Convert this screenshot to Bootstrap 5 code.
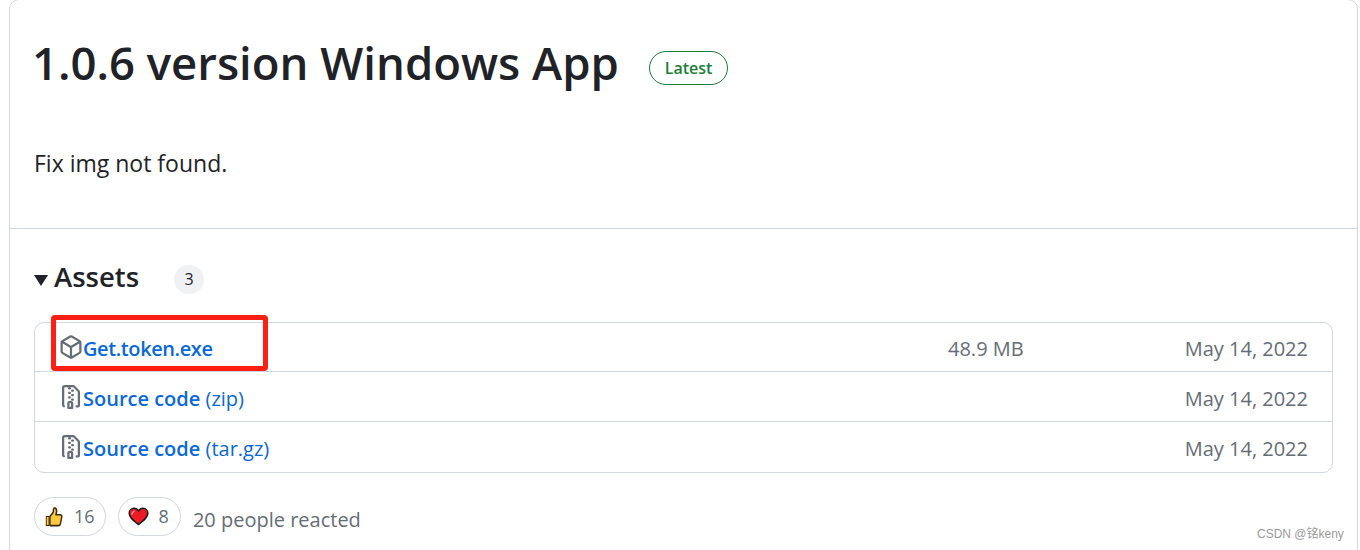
<!DOCTYPE html>
<html lang="en">
<head>
  <meta charset="UTF-8">
  <title>1.0.6 version Windows App</title>
  <meta name="viewport" content="width=device-width, initial-scale=1">
  <link href="https://cdn.jsdelivr.net/npm/bootstrap@5.3.3/dist/css/bootstrap.min.css" rel="stylesheet">
  <script src="https://cdn.jsdelivr.net/npm/bootstrap@5.3.3/dist/js/bootstrap.bundle.min.js"></script>
  <style>
    html, body { height: 550px; overflow: hidden; }
    body { background: #fff; color: #1f2328; font-family: "Open Sans", "Noto Sans", sans-serif; }
    .release-box { margin: -1px 2px 0 9px; height: 560px; border: 1px solid #d0d7de; border-radius: 10px; }
    .release-top { height: 229px; padding: 36px 24px 0; border-bottom: 1px solid #d0d7de; }
    .release-title { font-size: 45.5px; line-height: 52px; font-weight: 600; margin: 0 0 0 -2px; }
    .latest-pill { font-size: 16px; font-weight: 600; line-height: 32px; height: 34px; padding: 0 15px; margin: 12px 0 0 30px; color: #1a7f37; border: 1px solid #1a7f37; border-radius: 17px; }
    .release-note { font-size: 23px; line-height: 32px; margin: 59px 0 0; }
    .release-bottom { padding: 28px 24px 0; }
    .caret-down { width: 0; height: 0; border-style: solid; border-width: 11px 7px 0; border-color: #1f2328 transparent transparent; margin: 6px 6px 0 0; }
    .assets-title { font-size: 27.5px; line-height: 40px; font-weight: 600; margin: 0; }
    .count-pill { width: 30px; height: 29px; margin: 4px 0 0 35px; font-size: 16px; background: #eff1f3; border-radius: 15px; }
    .asset-list { margin: 25px 0 0; width: 1299px; border: 1px solid #d0d7de; border-radius: 10px; }
    .asset-row { height: 50px; padding: 4px 24px 0 24px; border-bottom: 1px solid #d0d7de; font-size: 20px; }
    .asset-row:first-child { height: 49px; }
    .asset-row:last-child { border-bottom: 0; }
    .asset-link { color: #0969da; font-weight: 600; text-decoration: none; }
    .asset-ext { color: #0969da; font-weight: 400; }
    .asset-icon { fill: #656d76; width: 24px; height: 24px; flex: none; margin: -4px 0 0 0; }
    .asset-tight { letter-spacing: -0.4px; }
    .asset-size { position: absolute; left: 948px; color: #656d76; }
    .asset-date { color: #656d76; }
    .reaction-row { margin-top: 24px; color: #656d76; }
    .reaction-pill { height: 39px; padding: 0 11px 0 9px; border: 1px solid #d0d7de; border-radius: 20px; font-size: 18px; gap: 10px; background: #fff; color: #656d76; }
    .reaction-pill.first-pill { padding-right: 10px; }
    .reaction-text { font-size: 20px; margin-left: 4px; padding-top: 6px; }
    .red-frame { position: absolute; left: 51px; top: 315px; width: 217px; height: 56px; border: 5px solid #ff1f14; border-radius: 4px; pointer-events: none; }
    .csdn-mark { position: absolute; left: 1257px; top: 526px; font-size: 12px; line-height: 16px; color: #9a9a9a; font-family: "Liberation Sans", "Noto Sans CJK SC", sans-serif; }
  </style>
</head>
<body>

<div class="release-box">
  <!-- title and note -->
  <div class="release-top">
    <div class="d-flex align-items-center">
      <h1 class="release-title">1.0.6 version Windows App</h1>
      <span class="latest-pill">Latest</span>
    </div>
    <p class="release-note">Fix img not found.</p>
  </div>

  <!-- assets -->
  <div class="release-bottom">
    <div class="d-flex align-items-center">
      <span class="caret-down"></span>
      <h2 class="assets-title">Assets</h2>
      <span class="count-pill d-flex align-items-center justify-content-center">3</span>
    </div>

    <div class="asset-list">
      <div class="asset-row d-flex align-items-center justify-content-between">
        <a href="#" class="asset-link d-flex align-items-center">
          <svg class="asset-icon" viewBox="0 0 16 16"><path d="m8.878.392 5.25 3.045c.54.314.872.89.872 1.514v6.098a1.75 1.75 0 0 1-.872 1.514l-5.25 3.045a1.75 1.75 0 0 1-1.756 0l-5.25-3.045A1.75 1.75 0 0 1 1 11.049V4.951c0-.624.332-1.201.872-1.514L7.122.392a1.75 1.75 0 0 1 1.756 0ZM7.875 1.69l-4.63 2.685L8 7.133l4.755-2.758-4.63-2.685a.248.248 0 0 0-.25 0ZM2.5 5.677v5.372c0 .09.047.171.125.216l4.625 2.683V8.432Zm6.25 8.271 4.625-2.683a.25.25 0 0 0 .125-.216V5.677L8.75 8.432Z"></path></svg>
          <span class="asset-tight">Get.token.exe</span>
        </a>
        <span class="asset-size">48.9 MB</span>
        <span class="asset-date">May 14, 2022</span>
      </div>
      <div class="asset-row d-flex align-items-center justify-content-between">
        <a href="#" class="asset-link d-flex align-items-center">
          <svg class="asset-icon" viewBox="0 0 16 16"><path d="M3.5 1.75v11.5c0 .09.048.173.126.217a.75.75 0 0 1-.752 1.298A1.748 1.748 0 0 1 2 13.25V1.75C2 .784 2.784 0 3.75 0h5.586c.464 0 .909.185 1.237.513l2.914 2.914c.329.328.513.773.513 1.237v8.586A1.75 1.75 0 0 1 12.25 15h-.5a.75.75 0 0 1 0-1.5h.5a.25.25 0 0 0 .25-.25V4.664a.25.25 0 0 0-.073-.177L9.513 1.573a.25.25 0 0 0-.177-.073H7.25a.75.75 0 0 1 0 1.5h-.5a.75.75 0 0 1 0-1.5h-3a.25.25 0 0 0-.25.25Zm3.75 8.75h.5c.966 0 1.75.784 1.75 1.75v3a.75.75 0 0 1-.75.75h-2.5a.75.75 0 0 1-.75-.75v-3c0-.966.784-1.75 1.75-1.75ZM6 5.25a.75.75 0 0 1 .75-.75h.5a.75.75 0 0 1 0 1.5h-.5A.75.75 0 0 1 6 5.25Zm.75 2.25h.5a.75.75 0 0 1 0 1.5h-.5a.75.75 0 0 1 0-1.5ZM8 6.75A.75.75 0 0 1 8.75 6h.5a.75.75 0 0 1 0 1.5h-.5A.75.75 0 0 1 8 6.75ZM8.75 3h.5a.75.75 0 0 1 0 1.5h-.5a.75.75 0 0 1 0-1.5ZM8 9.75A.75.75 0 0 1 8.75 9h.5a.75.75 0 0 1 0 1.5h-.5A.75.75 0 0 1 8 9.75Zm-1 2.5v2.25h1v-2.25a.25.25 0 0 0-.25-.25h-.5a.25.25 0 0 0-.25.25Z"></path></svg>
          <span>Source code <span class="asset-ext">(zip)</span></span>
        </a>
        <span class="asset-date">May 14, 2022</span>
      </div>
      <div class="asset-row d-flex align-items-center justify-content-between">
        <a href="#" class="asset-link d-flex align-items-center">
          <svg class="asset-icon" viewBox="0 0 16 16"><path d="M3.5 1.75v11.5c0 .09.048.173.126.217a.75.75 0 0 1-.752 1.298A1.748 1.748 0 0 1 2 13.25V1.75C2 .784 2.784 0 3.75 0h5.586c.464 0 .909.185 1.237.513l2.914 2.914c.329.328.513.773.513 1.237v8.586A1.75 1.75 0 0 1 12.25 15h-.5a.75.75 0 0 1 0-1.5h.5a.25.25 0 0 0 .25-.25V4.664a.25.25 0 0 0-.073-.177L9.513 1.573a.25.25 0 0 0-.177-.073H7.25a.75.75 0 0 1 0 1.5h-.5a.75.75 0 0 1 0-1.5h-3a.25.25 0 0 0-.25.25Zm3.75 8.75h.5c.966 0 1.75.784 1.75 1.75v3a.75.75 0 0 1-.75.75h-2.5a.75.75 0 0 1-.75-.75v-3c0-.966.784-1.75 1.75-1.75ZM6 5.25a.75.75 0 0 1 .75-.75h.5a.75.75 0 0 1 0 1.5h-.5A.75.75 0 0 1 6 5.25Zm.75 2.25h.5a.75.75 0 0 1 0 1.5h-.5a.75.75 0 0 1 0-1.5ZM8 6.75A.75.75 0 0 1 8.75 6h.5a.75.75 0 0 1 0 1.5h-.5A.75.75 0 0 1 8 6.75ZM8.75 3h.5a.75.75 0 0 1 0 1.5h-.5a.75.75 0 0 1 0-1.5ZM8 9.75A.75.75 0 0 1 8.75 9h.5a.75.75 0 0 1 0 1.5h-.5A.75.75 0 0 1 8 9.75Zm-1 2.5v2.25h1v-2.25a.25.25 0 0 0-.25-.25h-.5a.25.25 0 0 0-.25.25Z"></path></svg>
          <span>Source code <span class="asset-ext">(tar.gz)</span></span>
        </a>
        <span class="asset-date">May 14, 2022</span>
      </div>
    </div>

    <!-- reactions -->
    <div class="reaction-row d-flex align-items-center gap-2">
      <span class="reaction-pill first-pill d-flex align-items-center">
        <svg width="20" height="22" viewBox="0 0 22 22" preserveAspectRatio="none"><path d="M2 10h4v10H2z" fill="#3a2a10" /><path d="M3 11h2v8H3z" fill="#ffc83d" /><path d="M6.5 19.5V10.5l3.2-3.6c.7-1 .8-2.2.8-3.6 0-1 .8-1.6 1.7-1.2 1.5.7 1.9 2.8 1.4 4.6l-.5 2h4.5c1.4 0 2.2 1.2 1.9 2.4l-1.4 6.6c-.3 1.2-1.2 1.9-2.4 1.9H8.5c-.8 0-2-.2-2-.2Z" fill="#ffc83d" stroke="#3a2a10" stroke-width="1.6" stroke-linejoin="round" /></svg>
        16
      </span>
      <span class="reaction-pill d-flex align-items-center ms-1">
        <svg width="21" height="19" viewBox="0 0 22 20"><path d="M11 18.5C5 14 1.2 10.8 1.2 6.6 1.2 3.5 3.6 1.4 6.2 1.4c2 0 3.8 1 4.8 3 1-2 2.8-3 4.8-3 2.6 0 5 2.1 5 5.2 0 4.2-3.8 7.4-9.8 11.9Z" fill="#ec1c24" stroke="#1b1b1b" stroke-width="1.6" stroke-linejoin="round" /><path d="M4 7.5c.2-1.6 1-2.6 2.4-3" fill="none" stroke="#ff9a9a" stroke-width="1.4" stroke-linecap="round" /></svg>
        8
      </span>
      <span class="reaction-text">20 people reacted</span>
    </div>
  </div>
</div>

<!-- annotations drawn over the screenshot -->
<div class="red-frame"></div>
<div class="csdn-mark">CSDN @铭keny</div>

</body>
</html>
